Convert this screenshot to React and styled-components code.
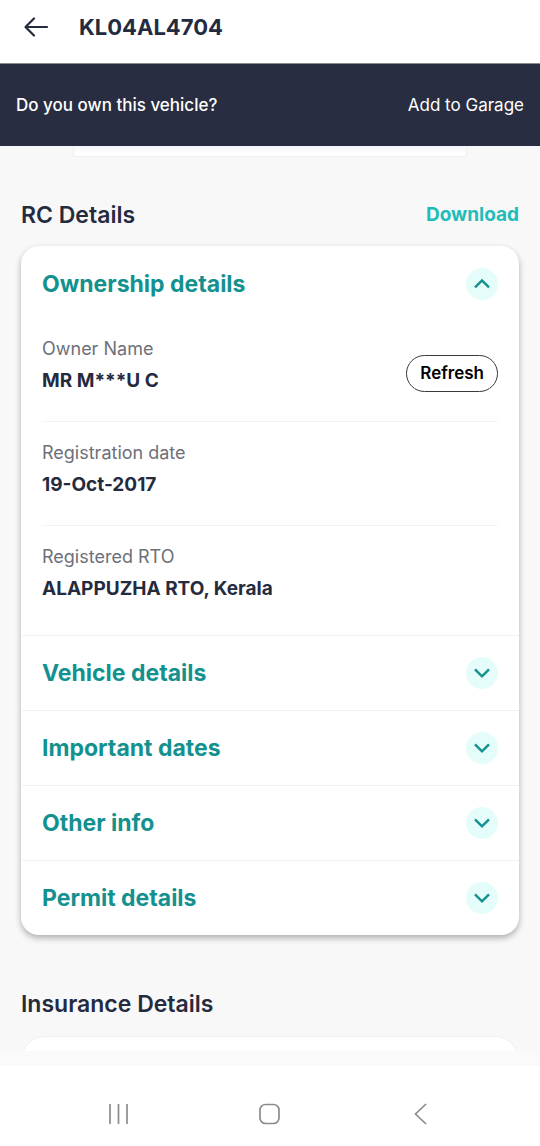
import React, { useState } from 'react'
import styled, { createGlobalStyle } from 'styled-components'

const sections = [
    {
        title: 'Ownership details',
        fields: [
            { label: 'Owner Name', value: 'MR M***U C', action: 'Refresh' },
            { label: 'Registration date', value: '19-Oct-2017' },
            { label: 'Registered RTO', value: 'ALAPPUZHA RTO, Kerala' },
        ],
    },
    { title: 'Vehicle details', fields: [] },
    { title: 'Important dates', fields: [] },
    { title: 'Other info', fields: [] },
    { title: 'Permit details', fields: [] },
]

const Chevron = ({ up }) => (
    <ChevronCircle>
        <svg width="18" height="18" viewBox="0 0 18 18" fill="none" stroke="#13918f" strokeWidth="2.4">
            <path d={up ? 'M2 12.4 9 5.4l7 7' : 'M2 5.4 9 12.4l7-7'} />
        </svg>
    </ChevronCircle>
)

const AccordionSection = ({ title, fields, open, onToggle }) => (
    <Section>
        <SectionHeader type="button" $open={open} aria-expanded={open} onClick={onToggle}>
            {title}
            <Chevron up={open} />
        </SectionHeader>
        {open && fields.length > 0 && (
            <FieldList>
                {fields.map((field) => (
                    <Field key={field.label}>
                        <div>
                            <FieldLabel>{field.label}</FieldLabel>
                            <FieldValue>{field.value}</FieldValue>
                        </div>
                        {field.action && <PillButton type="button">{field.action}</PillButton>}
                    </Field>
                ))}
            </FieldList>
        )}
    </Section>
)

const App = () => {
    const [openTitle, setOpenTitle] = useState('Ownership details')

    return (
        <Screen>
            <GlobalStyle />
            <TopBar>
                <IconButton type="button" aria-label="Back">
                    <svg width="26" height="22" viewBox="0 0 26 22" fill="none" stroke="#252b3f" strokeWidth="2.2" strokeLinecap="round" strokeLinejoin="round">
                        <path d="M24 11H3M11 2.5 2.5 11l8.5 8.5" />
                    </svg>
                </IconButton>
                <PlateNumber>KL04AL4704</PlateNumber>
            </TopBar>
            <Banner>
                <BannerText>Do you own this vehicle?</BannerText>
                <BannerButton type="button">Add to Garage</BannerButton>
            </Banner>
            <Content>
                <PreviewCard />
                <HeadingRow>
                    <Heading>RC Details</Heading>
                    <DownloadLink href="#download">Download</DownloadLink>
                </HeadingRow>
                <Card>
                    {sections.map(({ title, fields }) => (
                        <AccordionSection
                            key={title}
                            title={title}
                            fields={fields}
                            open={openTitle === title}
                            onToggle={() => setOpenTitle(openTitle === title ? '' : title)}
                        />
                    ))}
                </Card>
                <InsuranceHeading>Insurance Details</InsuranceHeading>
                <InsuranceCard />
            </Content>
            <BottomStrip />
            <NavBar>
                <IconButton type="button" aria-label="Recent apps">
                    <svg width="22" height="22" viewBox="0 0 22 22" stroke="#8c8c8c" strokeWidth="1.7">
                        <path d="M2 1v20M10.5 1v20M19 1v20" />
                    </svg>
                </IconButton>
                <IconButton type="button" aria-label="Home">
                    <svg width="22" height="22" viewBox="0 0 22 22" fill="none" stroke="#8c8c8c" strokeWidth="1.7">
                        <rect x="1" y="1.5" width="19" height="19" rx="5.5" />
                    </svg>
                </IconButton>
                <IconButton type="button" aria-label="Go back">
                    <svg width="22" height="22" viewBox="0 0 22 22" fill="none" stroke="#8c8c8c" strokeWidth="1.7">
                        <path d="M16 1 5.5 11 16 21" />
                    </svg>
                </IconButton>
            </NavBar>
        </Screen>
    )
}

export default App


const GlobalStyle = createGlobalStyle`
    * {
        box-sizing: border-box;
    }
    body {
        margin: 0;
        background: #f8f8f8;
        color: #252b3f;
        font-family: Inter, "Liberation Sans", sans-serif;
    }
    h1, h2, p {
        margin: 0;
    }
    button {
        font-family: inherit;
        background: none;
        border: none;
        padding: 0;
        cursor: pointer;
    }
`;

const Screen = styled.div`
    height: 100vh;
    display: flex;
    flex-direction: column;
`;

const TopBar = styled.header`
    display: flex;
    align-items: center;
    gap: 30px;
    padding: 9px 23px 18px;
    background: #fff;
    border-bottom: 1px solid #8a8b90;
`;

const IconButton = styled.button`
    display: grid;
    place-items: center;
`;

const PlateNumber = styled.h1`
    font-size: 22px;
    line-height: 36px;
    font-weight: 700;
`;

const Banner = styled.div`
    display: flex;
    align-items: center;
    justify-content: space-between;
    padding: 29px 16px;
    background: #292d41;
    color: #fff;
`;

const BannerText = styled.p`
    font-size: 17px;
    line-height: 24px;
    font-weight: 500;
`;

const BannerButton = styled.button`
    color: #fff;
    font-size: 17px;
    line-height: 24px;
`;

const Content = styled.main`
    flex: 1;
    min-height: 0;
    overflow-y: auto;
    scrollbar-width: none;
    padding: 0 21px;
`;

const PreviewCard = styled.div`
    height: 11px;
    margin: 0 52px;
    background: linear-gradient(#f6f6fa, #fff 8px);
    border: 1px solid #efefef;
    border-top: none;
`;

const HeadingRow = styled.div`
    display: flex;
    align-items: center;
    justify-content: space-between;
    margin: 42px 0 15px;
`;

const Heading = styled.h2`
    font-size: 23px;
    line-height: 32px;
    font-weight: 600;
`;

const InsuranceHeading = styled(Heading)`
    margin: 53px 0 16px;
`;

const DownloadLink = styled.a`
    color: #1fbdba;
    font-size: 19px;
    line-height: 32px;
    font-weight: 700;
    text-decoration: none;
`;

const Card = styled.div`
    background: #fff;
    border-radius: 18px;
    box-shadow: 0 3px 6px rgba(0, 0, 0, 0.3);
`;

const InsuranceCard = styled.div`
    height: 120px;
    background: #fff;
    border: 1px solid #f0f0f0;
    border-radius: 24px;
`;

const Section = styled.section`
    & + & {
        border-top: 1px solid #f1f1f1;
    }
`;

const SectionHeader = styled.button`
    display: flex;
    align-items: center;
    justify-content: space-between;
    width: 100%;
    padding: ${props => props.$open ? '22px 21px 18px' : '21px'};
    color: #13918f;
    font-size: 23px;
    line-height: 32px;
    font-weight: 700;
    text-align: left;
`;

const ChevronCircle = styled.span`
    display: grid;
    place-items: center;
    width: 32px;
    height: 32px;
    border-radius: 50%;
    background: #e4fdfa;
`;

const FieldList = styled.div`
    padding: 0 21px 6px;
`;

const Field = styled.div`
    display: flex;
    align-items: flex-end;
    justify-content: space-between;
    padding: 19px 0 25px;
    border-bottom: 1px solid #f3f3f3;
    &:last-child {
        border-bottom: none;
    }
`;

const FieldLabel = styled.p`
    color: #6d7079;
    font-size: 18px;
    line-height: 24px;
`;

const FieldValue = styled.p`
    margin-top: 5px;
    font-size: 19px;
    line-height: 30px;
    font-weight: 700;
`;

const PillButton = styled.button`
    margin-bottom: 4px;
    padding: 5px 13px;
    border: 1px solid #3a3a3a;
    border-radius: 19px;
    color: #000;
    font-size: 17px;
    line-height: 25px;
    font-weight: 600;
`;

const BottomStrip = styled.div`
    height: 15px;
    background: #fafafa;
`;

const NavBar = styled.nav`
    display: flex;
    align-items: center;
    justify-content: center;
    gap: 129px;
    padding: 37px 0 21px;
    background: #fff;
`;
